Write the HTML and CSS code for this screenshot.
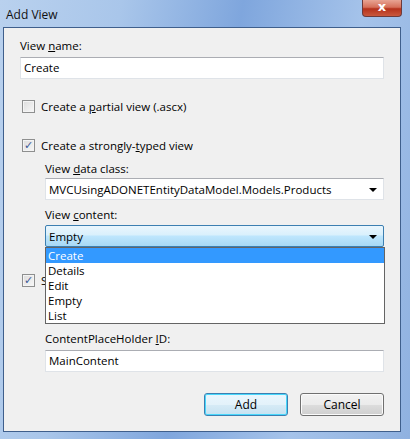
FILE: index.html
```html
<!doctype html>
<html lang="en">
<head>
  <meta charset="utf-8">
  <title>Add View</title>
  <link rel="stylesheet" href="styles.css">
</head>
<body>

<div class="window">
  <div class="titlebar">
    <span class="title">Add View</span>
    <span class="closebtn">x</span>
  </div>

  <div class="client">
    <div class="label first">View <u>n</u>ame:</div>
    <div class="textbox">Create</div>

    <div class="checkrow partial">
      <span class="checkbox"></span>
      <span>Create a <u>p</u>artial view (.ascx)</span>
    </div>

    <div class="checkrow typed">
      <span class="checkbox checked">&#10003;</span>
      <span>Create a strongly-<u>t</u>yped view</span>
    </div>

    <div class="indent">
      <div class="label gap8">View <u>d</u>ata class:</div>
      <div class="combo">
        <span>MVCUsingADONETEntityDataModel.Models.Products</span>
        <span class="arrow"></span>
      </div>

      <div class="label gap7">View <u>c</u>ontent:</div>
      <div class="dropwrap">
        <div class="combo focused">
          <span>Empty</span>
          <span class="arrow"></span>
        </div>
        <!-- open drop down list, lies over the rows below -->
        <ul class="droplist">
          <li class="selected">Create</li>
          <li>Details</li>
          <li>Edit</li>
          <li>Empty</li>
          <li>List</li>
        </ul>
      </div>
    </div>

    <div class="checkrow master">
      <span class="checkbox checked">&#10003;</span>
      <span>S</span>
    </div>

    <div class="indent">
      <div class="textbox masterpath"></div>
      <div class="label gap17">ContentPlaceHolder <u>I</u>D:</div>
      <div class="textbox">MainContent</div>
    </div>

    <div class="buttons">
      <button class="btn default">Add</button>
      <button class="btn">Cancel</button>
    </div>
  </div>
</div>

</body>
</html>
```

FILE: styles.css
```css
body {
    margin: 0;
    font-family: "Open Sans", "Noto Sans", sans-serif;
    font-size: 11.5px;
    color: #000;
}

.window {
    width: 410px;
    height: 439px;
    overflow: hidden;
    background: linear-gradient(100deg, #b9d1ee 0%, #a9c6ea 25%, #7fa6dd 50%, #a5c3ea 75%, #8fb1e0 100%);
}

.titlebar {
    height: 27px;
    display: flex;
    align-items: center;
    justify-content: space-between;
    padding-left: 6px;
    box-sizing: border-box;
}

.title {
    font-size: 12px;
    color: #111;
    margin-top: 1px;
}

.closebtn {
    align-self: flex-start;
    width: 40px;
    height: 17px;
    margin-right: 8px;
    box-sizing: border-box;
    border: 1px solid #6d3a3a;
    border-top: 0;
    border-radius: 0 0 4px 4px;
    background: linear-gradient(#e8a493 0%, #d6705a 45%, #b5321c 55%, #c9583d 100%);
    color: #fff;
    font-weight: bold;
    font-size: 13px;
    line-height: 14px;
    text-align: center;
    font-family: "DejaVu Sans", sans-serif;
}

.client {
    margin-left: 3px;
    width: 398px;
    height: 405px;
    border: 1px solid #3f5f8c;
    background: #f0f0f0;
    padding: 0 16px;
    box-sizing: border-box;
}

.label {
    line-height: 15px;
    height: 15px;
}

.label.first {
    padding-top: 10px;
}

.gap8 { margin-top: 8px; }
.gap7 { margin-top: 7px; }
.gap17 { margin-top: 17px; }

.textbox {
    height: 22px;
    margin-top: 4px;
    background: #fff;
    border: 1px solid #dfe3e8;
    border-top-color: #abadb3;
    box-sizing: border-box;
    padding-left: 3px;
    line-height: 20px;
}

.checkrow {
    display: flex;
    align-items: center;
    height: 15px;
    line-height: 15px;
}

.partial { margin-top: 20px; }
.typed { margin-top: 24px; }
.master { margin-top: 26px; }

.checkbox {
    width: 13px;
    height: 13px;
    margin: 0 6px 0 2px;
    box-sizing: border-box;
    border: 1px solid #8e8f8f;
    background: linear-gradient(135deg, #dcdcdc, #f8f8f8);
    box-shadow: inset 0 0 0 1px #f4f4f4;
    font-size: 11px;
    line-height: 11px;
    text-align: center;
    color: #3d5a98;
    font-weight: bold;
    font-family: "DejaVu Sans", sans-serif;
}

.indent {
    padding-left: 25px;
}

.combo {
    height: 22px;
    margin-top: 2px;
    display: flex;
    align-items: center;
    justify-content: space-between;
    padding: 0 6px 0 3px;
    background: #fff;
    border: 1px solid #dfe3e8;
    border-top-color: #abadb3;
    box-sizing: border-box;
}

.combo.focused {
    margin-top: 3px;
    border: 1px solid #3c7fb1;
    border-radius: 2px;
    background: linear-gradient(#eaf6fd 0%, #d9f0fc 45%, #bee6fd 50%, #a7d9f5 100%);
}

.arrow {
    width: 0;
    height: 0;
    border-left: 4px solid transparent;
    border-right: 4px solid transparent;
    border-top: 4px solid #000;
    margin-top: 1px;
}

.dropwrap {
    position: relative;
}

.droplist {
    position: absolute;
    left: 0;
    right: -1px;
    top: 22px;
    margin: 0;
    padding: 0;
    list-style: none;
    background: #fff;
    border: 1px solid #646464;
    z-index: 2;
}

.droplist li {
    height: 15px;
    line-height: 15px;
    padding-left: 2px;
}

.droplist li.selected {
    background: #3399ff;
    color: #fff;
}

.masterpath {
    margin-top: 4px;
}

.buttons {
    display: flex;
    justify-content: flex-end;
    gap: 12px;
    margin-top: 21px;
}

.btn {
    width: 84px;
    height: 23px;
    font-family: inherit;
    font-size: 12px;
    color: #000;
    border: 1px solid #707070;
    border-radius: 3px;
    background: linear-gradient(#f2f2f2 0%, #ebebeb 50%, #dddddd 51%, #cfcfcf 100%);
    box-shadow: inset 0 0 0 1px #fbfbfb;
    padding: 0;
}

.btn.default {
    border-color: #3c7fb1;
    box-shadow: inset 0 0 0 1px #48d7fb;
    background: linear-gradient(#eaf6fd 0%, #e3f2fa 50%, #d6ebf6 51%, #c6e2f1 100%);
}
```
